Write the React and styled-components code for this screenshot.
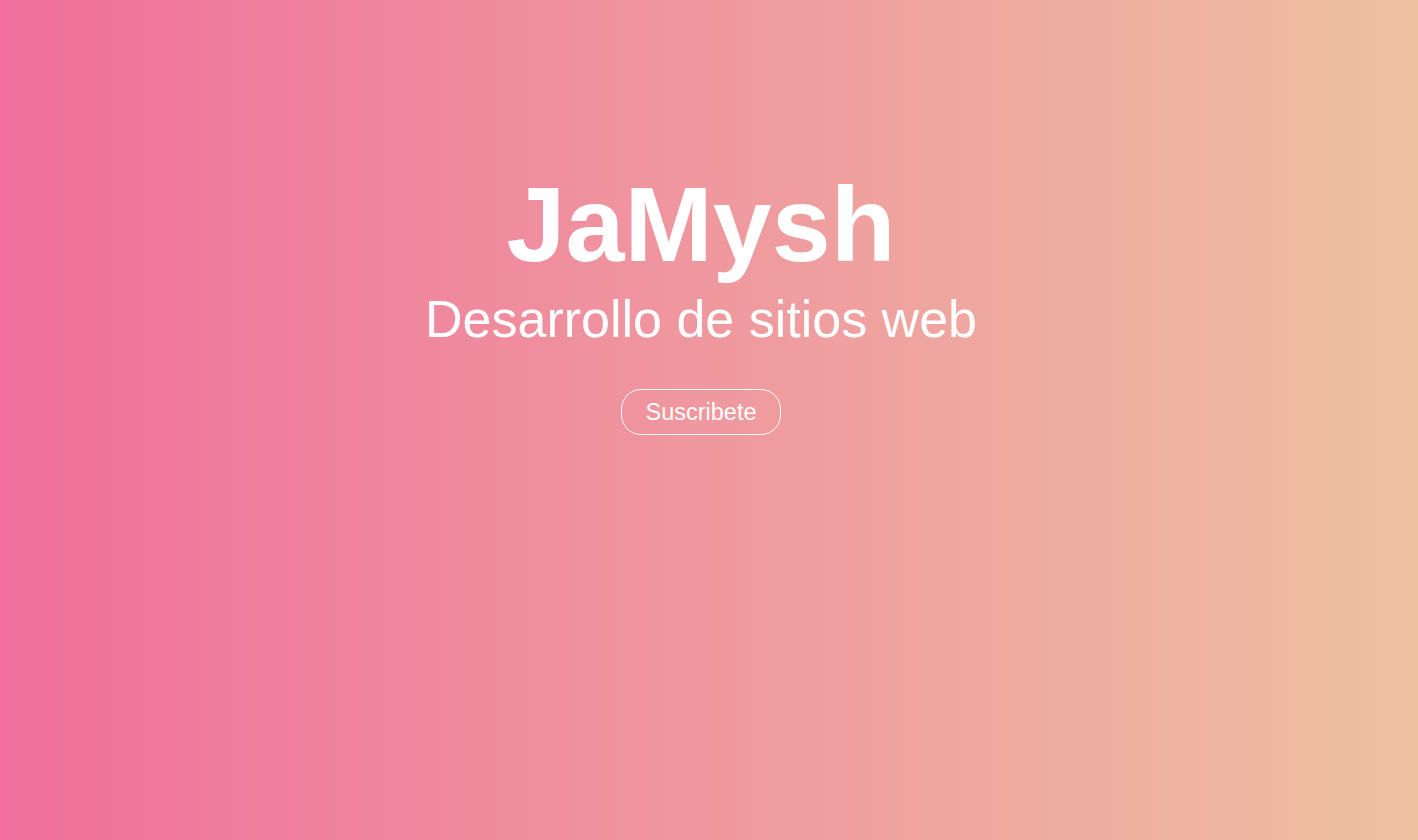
import styled, { createGlobalStyle } from "styled-components";

const GlobalStyle = createGlobalStyle`
  html, body {
    margin: 0;
    padding: 0;
  }
  body {
    font-family: "Liberation Sans", Arial, sans-serif;
  }
`;

const Hero = styled.header`
  width: 100%;
  height: 840px;
  box-sizing: border-box;
  background: linear-gradient(to right, #f06f9c, #eec1a1);
  display: flex;
  flex-direction: column;
  align-items: center;
  padding: 159px 16px 0 0;
  color: #ffffff;
`;

const Title = styled.h1`
  margin: 0;
  font-size: 106px;
  font-weight: 700;
  line-height: 130px;
`;

const Subtitle = styled.h2`
  margin: 0;
  font-size: 52px;
  font-weight: 400;
  line-height: 60px;
`;

const Button = styled.button`
  margin-top: 40px;
  height: 46px;
  padding: 0 23px;
  border: 1px solid #ffffff;
  border-radius: 20px;
  background: transparent;
  color: #ffffff;
  font-family: "Liberation Sans", Arial, sans-serif;
  font-size: 23.5px;
  cursor: pointer;
`;

const App = () => {
  return (
    <>
      <GlobalStyle />
      <Hero>
        <Title>JaMysh</Title>
        <Subtitle>Desarrollo de sitios web</Subtitle>
        <Button>Suscribete</Button>
      </Hero>
    </>
  );
};

export default App;
